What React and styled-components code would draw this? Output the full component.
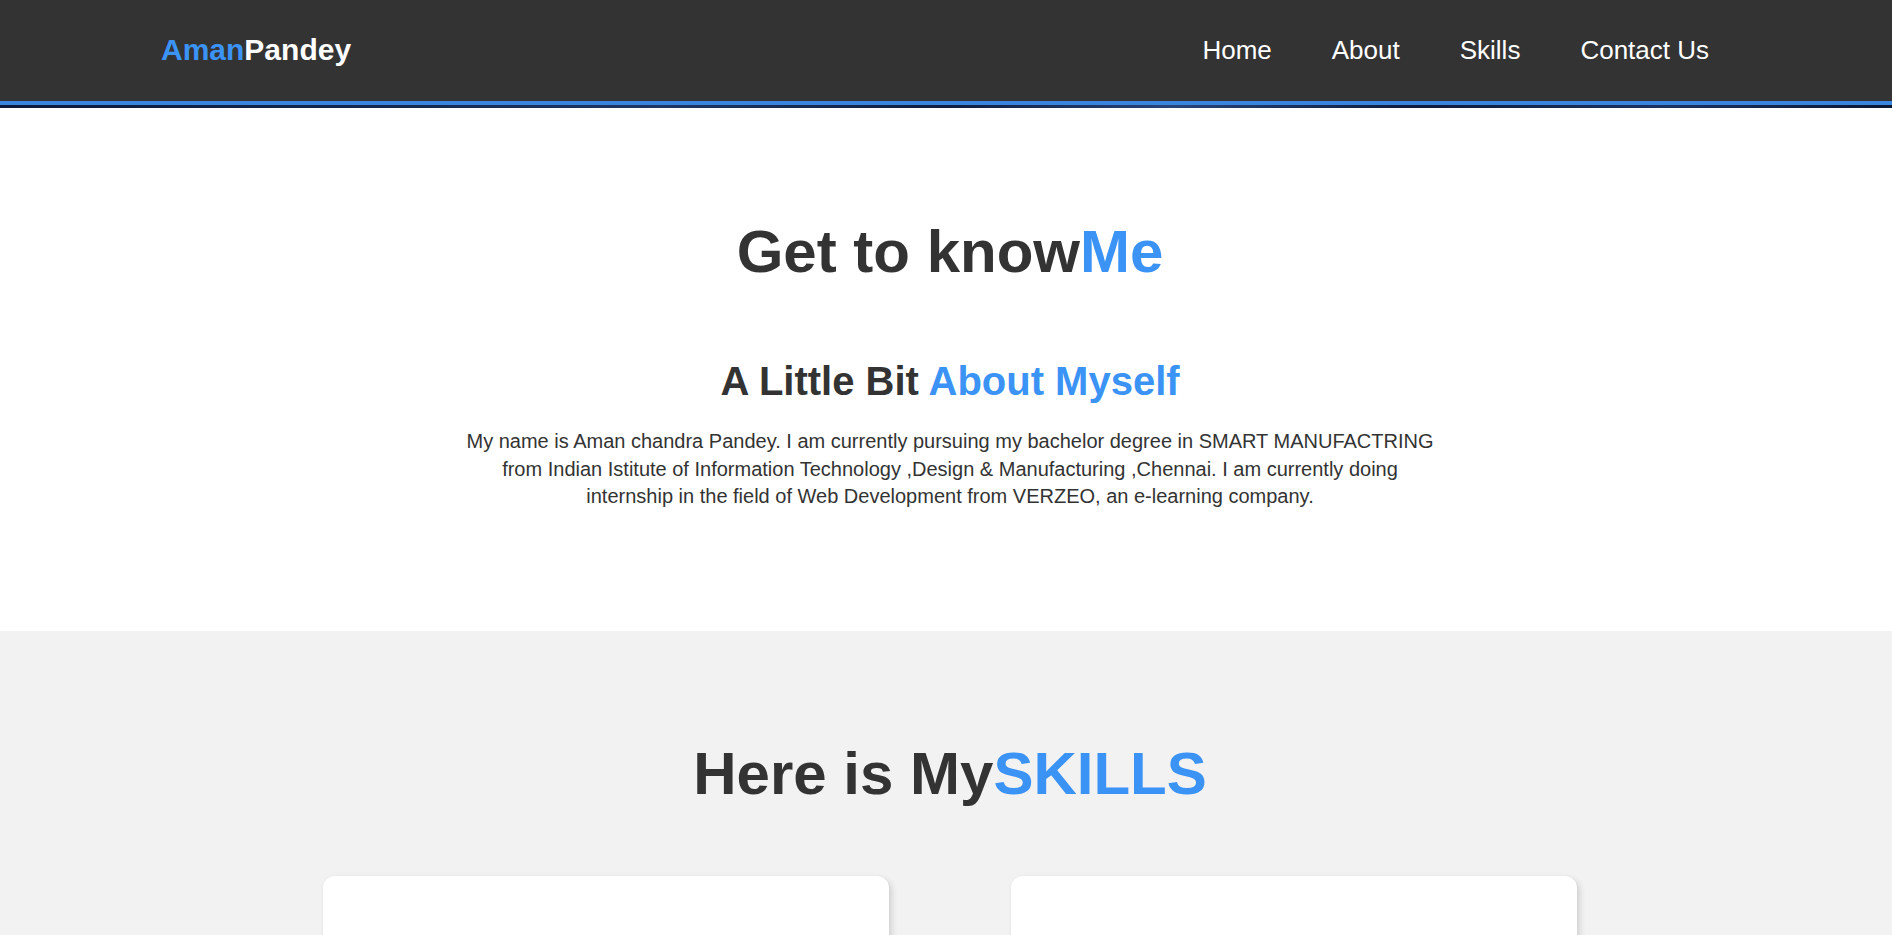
import React from "react";
import styled, { createGlobalStyle } from "styled-components";

const Global = createGlobalStyle`
  * { box-sizing: border-box; }
  html, body { margin: 0; padding: 0; background: #ffffff; }
  body { font-family: "Liberation Sans", Arial, sans-serif; color: #333333; }
`;

const BLUE = "#3b93f5";

const Header = styled.header`
  background: #333333;
  border-bottom: 4px solid #3a86df;
`;

const NavBar = styled.nav`
  height: 101px;
  display: flex;
  align-items: center;
  justify-content: space-between;
  padding: 0 183px 0 161px;
`;

const Logo = styled.a`
  font-size: 30px;
  line-height: 1.15;
  font-weight: 700;
  color: #ffffff;
  text-decoration: none;
`;

const Accent = styled.span`
  color: ${BLUE};
`;

const Links = styled.ul`
  display: flex;
  gap: 60px;
  list-style: none;
  margin: 0;
  padding: 0;
`;

const NavLink = styled.a`
  font-size: 26px;
  line-height: 1.15;
  color: #ffffff;
  text-decoration: none;
`;

const HeroStrip = styled.div`
  height: 3px;
  background: linear-gradient(90deg, #0b1a3a 0%, #13274f 20%, #1d3765 35%, #0e1d40 50%, #26457a 62%, #0d1b3c 75%, #1b3363 88%, #0a1733 100%);
`;

const Section = styled.section`
  background: ${(p) => (p.$tone === "grey" ? "#f2f2f2" : "#ffffff")};
  padding: ${(p) => p.$pad};
  display: flex;
  flex-direction: column;
  align-items: center;
`;

const Title = styled.h1`
  margin: 0;
  font-size: 60px;
  line-height: 72px;
  font-weight: 700;
  color: #333333;
  text-align: center;
`;

const SubTitle = styled.h2`
  margin: 69px 0 0;
  font-size: 40px;
  line-height: 48px;
  font-weight: 700;
  color: #333333;
  text-align: center;
`;

const Text = styled.p`
  margin: 23px 0 0;
  width: 976px;
  font-size: 20px;
  line-height: 27.7px;
  text-align: center;
  color: #333333;
`;

const Cards = styled.div`
  margin-top: 66px;
  display: flex;
  gap: 122px;
`;

const Card = styled.div`
  width: 566px;
  height: 320px;
  background: #ffffff;
  border-radius: 12px;
  box-shadow: 3px 3px 6px rgba(0, 0, 0, 0.13), 0 0 3px rgba(0, 0, 0, 0.04);
`;

export default function App() {
  return (
    <>
      <Global />
      <Header>
        <NavBar>
          <Logo href="#">
            <Accent>Aman</Accent>Pandey
          </Logo>
          <Links>
            <li><NavLink href="#">Home</NavLink></li>
            <li><NavLink href="#">About</NavLink></li>
            <li><NavLink href="#">Skills</NavLink></li>
            <li><NavLink href="#">Contact Us</NavLink></li>
          </Links>
        </NavBar>
      </Header>
      <HeroStrip />
      <Section $pad="108px 0 120px 8px">
        <Title>
          Get to know<Accent>Me</Accent>
        </Title>
        <SubTitle>
          A Little Bit <Accent>About Myself</Accent>
        </SubTitle>
        <Text>
          My name is Aman chandra Pandey. I am currently pursuing my bachelor degree in SMART MANUFACTRING
          from Indian Istitute of Information Technology ,Design &amp; Manufacturing ,Chennai. I am currently doing
          internship in the field of Web Development from VERZEO, an e-learning company.
        </Text>
      </Section>
      <Section $tone="grey" $pad="107px 0 80px 8px">
        <Title>
          Here is My<Accent>SKILLS</Accent>
        </Title>
        <Cards>
          <Card />
          <Card />
        </Cards>
      </Section>
    </>
  );
}
